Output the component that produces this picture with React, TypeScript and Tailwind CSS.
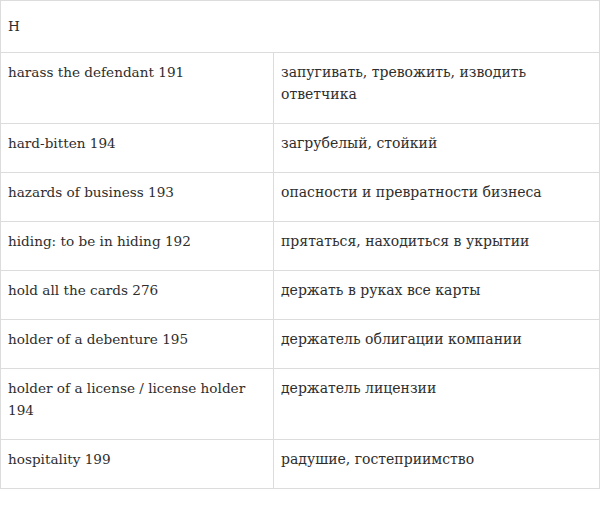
const rows: [string, string][] = [
  ['harass the defendant 191', 'запугивать, тревожить, изводить ответчика'],
  ['hard-bitten 194', 'загрубелый, стойкий'],
  ['hazards of business 193', 'опасности и превратности бизнеса'],
  ['hiding: to be in hiding 192', 'прятаться, находиться в укрытии'],
  ['hold all the cards 276', 'держать в руках все карты'],
  ['holder of a debenture 195', 'держатель облигации компании'],
  ['holder of a license / license holder 194', 'держатель лицензии'],
  ['hospitality 199', 'радушие, гостеприимство'],
];

export default function App() {
  return (
    <div className="w-[600px] h-[509px] bg-white text-[#2e2e2e] font-['DejaVu_Serif',serif] text-[13.6px] leading-[22px]">
      <table className="w-[600px] border-collapse table-fixed">
        <colgroup>
          <col className="w-[273px]" />
          <col />
        </colgroup>
        <tbody>
          <tr>
            <td colSpan={2} className="border border-[#dcdcdc] px-[7px] pt-[14px] pb-[15px] align-top">H</td>
          </tr>
          {rows.map(([en, ru]) => (
            <tr key={en}>
              <td className="border border-[#dcdcdc] px-[7px] pt-[8px] pb-[18px] align-top">{en}</td>
              <td className="border border-[#dcdcdc] px-[7px] pt-[8px] pb-[18px] align-top text-[14px]">{ru}</td>
            </tr>
          ))}
        </tbody>
      </table>
    </div>
  );
}
